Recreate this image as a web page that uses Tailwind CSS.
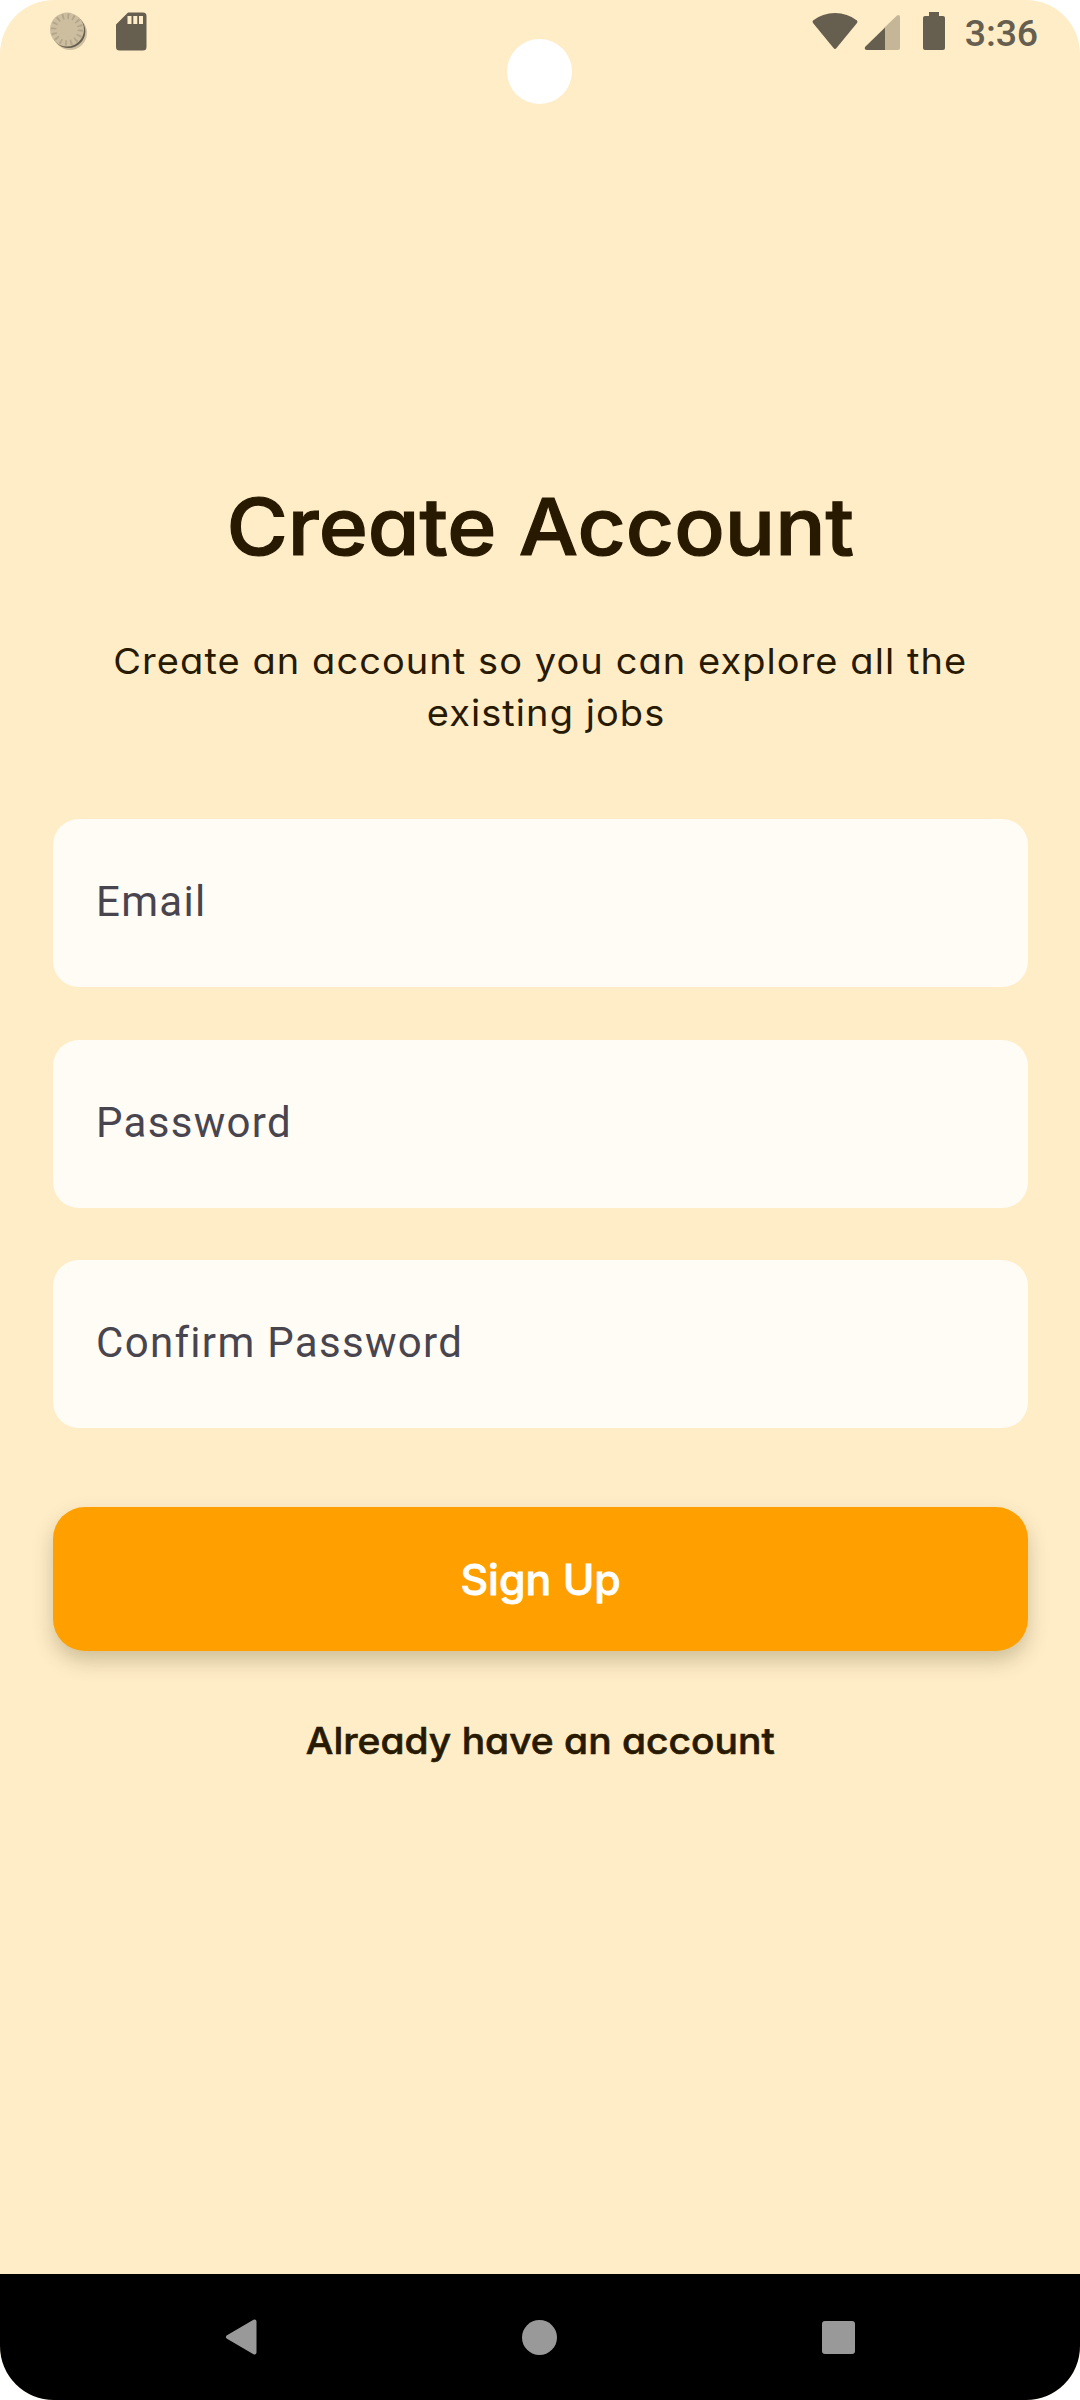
<!DOCTYPE html>
<html lang="en">
<head>
<meta charset="utf-8">
<title>Create Account</title>
<script src="https://cdn.jsdelivr.net/npm/@tailwindcss/browser@4"></script>
</head>
<body class="bg-white">
<div class="relative flex h-[2400px] w-[1080px] flex-col overflow-hidden rounded-[54px] bg-[#ffedc8] font-['Inter',sans-serif] text-[#271a00]">
  <header class="flex h-[64px] items-start justify-between pl-[50px] pr-[42px] pt-[12px] text-[#665e4f]">
    <div class="flex gap-[27px]">
      <svg class="h-[39px] w-[39px]" viewBox="0 0 39 39">
        <circle cx="20" cy="21" r="17" fill="#cfc09f"/>
        <circle cx="18.500" cy="19.200" r="16.800" fill="#665e4f"/>
        <circle cx="17" cy="17.600" r="17" fill="#ccbe9f"/>
        <circle cx="17" cy="17.600" r="13.300" fill="none" stroke="#b3a68a" stroke-width="5.400" stroke-dasharray="1.8 3.423"/>
      </svg>
      <svg class="h-[39px] w-[31px]" viewBox="0 0 31 39"><path fill="currentColor" fill-rule="evenodd" d="M12 .5H27q3.500 0 3.500 3.500V35q0 3.500-3.500 3.500H3.500Q0 38.500 0 35V12.500ZM11.500 4v8h4V4Zm5.800 0v8h4V4Zm5.700 0v8h4V4Z"/></svg>
    </div>
    <div class="flex">
      <svg class="h-[39px] w-[46px]" viewBox="0 0 46 39"><path fill="currentColor" d="M1 8.500Q0 9.500 1 11L21.500 36q1.500 1.800 3 0L45 11q1-1.500 0-2.500Q35.500 1 23 1T1 8.500Z"/></svg>
      <svg class="ml-[6px] h-[39px] w-[37px]" viewBox="0 0 37 39"><path fill="#c4b697" d="M20.500 15.500 33 3.500q2.500-1.500 3 1V36q0 2-2 2H20.500Z"/><path fill="currentColor" d="M21 15.500V38H3Q0 38 1 35Z"/></svg>
      <svg class="ml-[22px] h-[39px] w-[22px]" viewBox="0 0 22 39"><path fill="currentColor" d="M6 0H16V4h4q2 0 2 2V36q0 2-2 2H2q-2 0-2-2V6Q0 4 2 4H6Z"/></svg>
      <span class="ml-[20px] font-['Roboto'] text-[37.500px] font-medium leading-[42px] tracking-[-0.150px]">3:36</span>
    </div>
  </header>
  <div class="absolute left-[507px] top-[39px] size-[65px] rounded-full bg-white"></div>

  <main class="flex flex-1 flex-col pl-[53px] pr-[52.500px] pt-[414px]">
    <h1 class="flex h-[96px] scale-x-[1.06] items-center justify-center whitespace-nowrap text-[79px] font-medium leading-[96px] [-webkit-text-stroke:1.2px_#271a00] [font-feature-settings:'cv11']">Create Account</h1>
    <p class="mt-[61px] scale-x-[1.056] text-center text-[36px] leading-[52px] tracking-[1px] [font-feature-settings:'cv11']"><span class="whitespace-nowrap">Create an account so you can explore all the</span><br><span class="pl-[11px]">existing jobs</span></p>
    <form class="mt-[80px] flex flex-col gap-[52.500px] font-['Roboto'] text-[42px] tracking-[1.310px] text-[#49454f]">
      <div class="flex h-[168px] items-center rounded-[26px] bg-[#fffcf5] px-[43px] pb-[3px]">Email</div>
      <div class="flex h-[168px] items-center rounded-[26px] bg-[#fffcf5] px-[43px] pb-[3px]">Password</div>
      <div class="flex h-[168px] items-center rounded-[26px] bg-[#fffcf5] px-[43px] pb-[3px]">Confirm Password</div>
    </form>
    <button class="mt-[79px] h-[144px] rounded-[32px] bg-[#ffa000] text-[42px] font-medium text-white shadow-[0_10px_20px_rgba(70,65,20,0.260)] [-webkit-text-stroke:0.8px_#ffffff] [font-feature-settings:'cv11']"><span class="inline-block scale-x-[1.02]">Sign Up</span></button>
    <a class="mt-[64px] scale-x-[1.053] whitespace-nowrap text-center text-[37px] font-medium leading-[52px] [-webkit-text-stroke:0.6px_#271a00] [font-feature-settings:'cv11']">Already have an account</a>
  </main>

  <nav class="flex h-[126px] items-center bg-black pl-[225px] text-[#999999]">
    <svg class="h-[36px] w-[32px]" viewBox="0 0 32 36"><path fill="currentColor" stroke="currentColor" stroke-width="4" stroke-linejoin="round" d="M3 18 29.500 2.500V33.500Z"/></svg>
    <div class="ml-[265px] size-[35px] rounded-full bg-[#999999]"></div>
    <div class="ml-[264.500px] size-[33px] rounded-[3px] bg-[#999999]"></div>
  </nav>
</div>
</body>
</html>
